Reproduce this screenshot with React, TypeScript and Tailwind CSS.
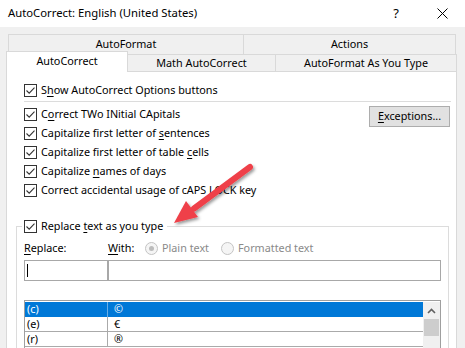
import React from "react";

const Check = ({ checked = true }: { checked?: boolean }) => (
  <span className="w-[13px] h-[13px] border border-[#333333] bg-white flex items-center justify-center shrink-0">
    {checked && (
      <svg width="11" height="11" viewBox="0 0 11 11">
        <path d="M1.5 5.5 L4.2 8.2 L9.5 2.6" fill="none" stroke="#333333" strokeWidth="1.1" />
      </svg>
    )}
  </span>
);

const Radio = ({ on = false }: { on?: boolean }) => (
  <span className="w-[13px] h-[13px] rounded-full border border-[#c4c4c4] bg-[#f5f5f5] flex items-center justify-center shrink-0">
    {on && <span className="w-[5px] h-[5px] rounded-full bg-[#bcbcbc]" />}
  </span>
);

const U = ({ children }: { children: React.ReactNode }) => (
  <span className="underline underline-offset-[2px] decoration-[1px]">{children}</span>
);

const CheckRow = ({ children }: { children: React.ReactNode }) => (
  <div className="h-[19px] flex items-center gap-[4px]">
    <Check />
    <span>{children}</span>
  </div>
);

const rows = [
  { key: "(c)", val: "©" },
  { key: "(e)", val: "€" },
  { key: "(r)", val: "®" },
];

export default function App() {
  return (
    <div className="w-[465px] h-[348px] overflow-hidden bg-[#f0f0f0] relative flex flex-col font-['Noto_Sans',sans-serif] text-[10.8px] text-black">
      {/* title bar */}
      <div className="h-[27px] shrink-0 bg-white flex items-center pl-[8px]">
        <span className="text-[11.3px]">AutoCorrect: English (United States)</span>
        <span className="ml-auto text-[13px] mr-[38px]">?</span>
        <svg width="11" height="11" viewBox="0 0 11 11" className="mr-[17px]">
          <path d="M0.5 0.5 L10.5 10.5 M10.5 0.5 L0.5 10.5" stroke="#000" strokeWidth="1" />
        </svg>
      </div>

      {/* tabs */}
      <div className="pt-[7px] shrink-0">
        <div className="ml-[8px] w-[448px] h-[20px] flex">
          <div className="w-[235px] border-t border-l border-[#d9d9d9] flex items-center justify-center">
            AutoFormat
          </div>
          <div className="flex-1 border-t border-l border-r border-[#d9d9d9] flex items-center justify-center">
            Actions
          </div>
        </div>
        <div className="ml-[6px] w-[451px] h-[18px] flex items-end">
          <div className="w-[122px] h-[21px] shrink-0 bg-white border-l border-t border-r border-[#d9d9d9] relative z-10 flex items-center justify-center pb-[1px]">
            AutoCorrect
          </div>
          <div className="w-[148px] h-[18px] border-t border-r border-b border-[#d9d9d9] flex items-center justify-center">
            Math AutoCorrect
          </div>
          <div className="flex-1 h-[18px] border-t border-r border-b border-[#d9d9d9] flex items-center justify-center">
            AutoFormat As You Type
          </div>
        </div>
      </div>

      {/* panel */}
      <div className="ml-[6px] w-[451px] flex-1 bg-white border-l border-r border-[#d9d9d9] flex flex-col">
        <div className="pt-[9px] pl-[17px]">
          <CheckRow>
            S<U>h</U>ow AutoCorrect Options buttons
          </CheckRow>
        </div>
        <div className="mt-[1px] ml-[17px] mr-[5px] h-px bg-[#dcdcdc]" />

        <div className="mt-[3px] pl-[17px] flex items-start justify-between">
          <div className="flex flex-col">
            <CheckRow>
              C<U>o</U>rrect TWo INitial CApitals
            </CheckRow>
            <CheckRow>
              Capitalize first letter of <U>s</U>entences
            </CheckRow>
            <CheckRow>
              Capitalize first letter of table <U>c</U>ells
            </CheckRow>
            <CheckRow>
              Capitalize <U>n</U>ames of days
            </CheckRow>
            <CheckRow>
              Correct accidental usage of cAPS <U>L</U>OCK key
            </CheckRow>
          </div>
          <button className="mt-[1px] mr-[6px] w-[81px] h-[21px] bg-[#e1e1e1] border border-[#adadad] flex items-center justify-center">
            <span>
              <U>E</U>xceptions...
            </span>
          </button>
        </div>

        {/* replace group */}
        <fieldset className="mt-[17px] ml-[9px] mr-[7px] flex-1 border border-[#dcdcdc] pl-[7px] pr-[7px]">
          <legend className="-ml-[2px] pl-[2px] pr-[4px] h-[19px] flex items-center gap-[4px]">
            <Check />
            <span>
              Replace <U>t</U>ext as you type
            </span>
          </legend>

          <div className="mt-[4px] h-[17px] flex items-center">
            <span className="w-[84px]">
              <U>R</U>eplace:
            </span>
            <span className="w-[37px]">
              <U>W</U>ith:
            </span>
            <span className="w-[76px] flex items-center">
              <Radio on />
              <span className="ml-[4px] text-[#8a8a8a]">Plain text</span>
            </span>
            <span className="flex items-center">
              <Radio />
              <span className="ml-[4px] text-[#8a8a8a]">Formatted text</span>
            </span>
          </div>

          <div className="mt-[3px] h-[21px] flex">
            <div className="w-[84px] border border-[#a8a8a8] flex items-center pl-[2px]">
              <span className="w-px h-[13px] bg-black" />
            </div>
            <div className="flex-1 border border-[#a8a8a8]" />
          </div>

          <div className="mt-[19px] border border-[#9f9f9f] flex pt-[1px]">
            <div className="flex-1 flex flex-col">
              {rows.map((r, i) => {
                const sel = i === 0;
                return (
                  <div
                    key={r.key}
                    className={
                      sel
                        ? "h-[15px] flex bg-[#0078d7] text-white"
                        : "h-[15px] flex border-b border-[#aaaaaa]"
                    }
                  >
                    <span
                      className={
                        sel
                          ? "w-[83px] border-r border-[#6aaee6] pl-[2px] flex items-center"
                          : "w-[83px] border-r border-[#aaaaaa] pl-[2px] flex items-center"
                      }
                    >
                      {r.key}
                    </span>
                    <span className="pl-[6px] flex items-center">{r.val}</span>
                  </div>
                );
              })}
            </div>
            <div className="w-[17px] bg-[#f0f0f0] flex flex-col items-center">
              <div className="h-[17px] flex items-center justify-center">
                <svg width="9" height="6" viewBox="0 0 9 6">
                  <path d="M1 5 L4.5 1.5 L8 5" fill="none" stroke="#606060" strokeWidth="1.6" />
                </svg>
              </div>
              <div className="w-[15px] h-[17px] bg-[#cdcdcd]" />
              <div className="h-[20px]" />
            </div>
          </div>
        </fieldset>
      </div>

      {/* red arrow callout */}
      <svg className="absolute left-0 top-0 pointer-events-none" width="465" height="348" viewBox="0 0 465 348">
        <defs>
          <filter id="sh" x="-20%" y="-20%" width="140%" height="140%">
            <feDropShadow dx="1.5" dy="2" stdDeviation="1.8" floodColor="#000" floodOpacity="0.4" />
          </filter>
        </defs>
        <g filter="url(#sh)">
          <line x1="250" y1="167" x2="194" y2="208.5" stroke="#ef4149" strokeWidth="6" strokeLinecap="round" />
          <polygon points="174,223 198,217 186,201" fill="#ef4149" />
        </g>
      </svg>
    </div>
  );
}
